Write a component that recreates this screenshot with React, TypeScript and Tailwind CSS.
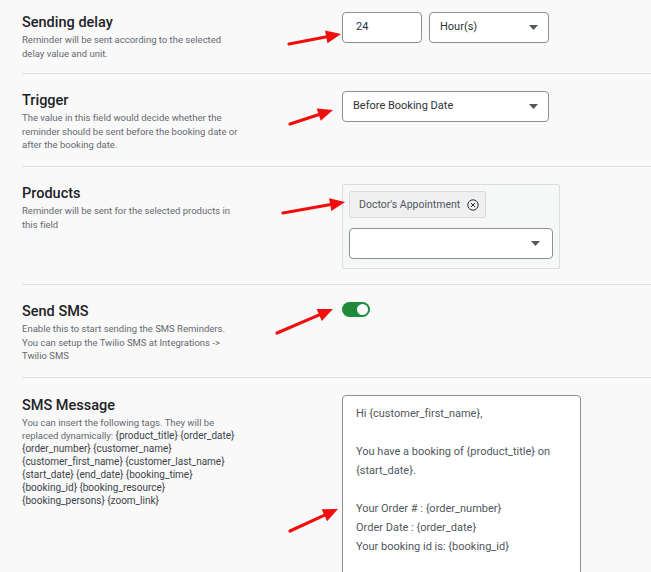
import React from 'react';

type Arrow = { x1: number; y1: number; x2: number; y2: number };

const arrows: Arrow[] = [
  { x1: 289, y1: 44, x2: 341, y2: 34 },
  { x1: 290, y1: 124, x2: 333, y2: 110 },
  { x1: 283, y1: 213, x2: 345, y2: 202 },
  { x1: 277, y1: 333, x2: 333, y2: 309 },
  { x1: 290, y1: 531, x2: 338, y2: 509 },
];

function ArrowShape({ x1, y1, x2, y2 }: Arrow) {
  const dx = x2 - x1;
  const dy = y2 - y1;
  const len = Math.sqrt(dx * dx + dy * dy);
  const ux = dx / len;
  const uy = dy / len;
  const head = 15;
  const half = 6.5;
  const bx = x2 - ux * head;
  const by = y2 - uy * head;
  const pts = `${x2},${y2} ${bx - uy * half},${by + ux * half} ${bx + uy * half},${by - ux * half}`;
  return (
    <g>
      <line x1={x1} y1={y1} x2={bx + ux * 2} y2={by + uy * 2} stroke="#f20d0d" strokeWidth={3.2} strokeLinecap="round" />
      <polygon points={pts} fill="#f20d0d" />
    </g>
  );
}

function Caret() {
  return (
    <svg width="9" height="5" viewBox="0 0 9 5" className="shrink-0">
      <path d="M0 0 L9 0 L4.5 5 Z" fill="#50575e" />
    </svg>
  );
}

function Label({ title, children }: { title: string; children: React.ReactNode }) {
  return (
    <div className="w-[320px] shrink-0">
      <h3 className="text-[14.5px] leading-[20px] font-medium text-[#1d2327]">{title}</h3>
      <p className="max-w-[217px] text-[9.5px] leading-[13.5px] text-[#646970]">{children}</p>
    </div>
  );
}

// tags in the SMS help text are a touch darker and larger
const Tag = ({ children }: { children: React.ReactNode }) => (
  <span className="text-[10px] text-[#3c434a]">{children}</span>
);

export default function App() {
  return (
    <div className="relative min-h-screen h-[572px] overflow-hidden bg-[#f9f9f9] pl-[22px] font-['Roboto',sans-serif] [font-variant-ligatures:none]">
      {/* Sending delay */}
      <div className="flex h-[74px] border-b border-[#e2e2e2] pt-[12px]">
        <div className="w-[320px] shrink-0 pt-[1px]">
          <h3 className="text-[14.5px] leading-[20px] font-medium text-[#1d2327]">Sending delay</h3>
          <p className="max-w-[217px] text-[9.5px] leading-[13.5px] text-[#646970]">
            Reminder will be sent according to the selected delay value and unit.
          </p>
        </div>
        <div className="flex gap-[7px]">
          <div className="flex h-[31px] w-[80px] items-center rounded-[4px] border border-[#8c8f94] bg-white pl-[13px] text-[11px] text-[#2c3338]">
            24
          </div>
          <div className="flex h-[31px] w-[120px] items-center justify-between rounded-[4px] border border-[#8c8f94] bg-white pl-[10px] pr-[10px] text-[11px] text-[#2c3338]">
            <span>Hour(s)</span>
            <Caret />
          </div>
        </div>
      </div>

      {/* Trigger */}
      <div className="flex h-[93px] border-b border-[#e2e2e2] pt-[17px]">
        <Label title="Trigger">
          The value in this field would decide whether the reminder should be sent before the booking date or after the booking date.
        </Label>
        <div className="flex h-[31px] w-[207px] items-center justify-between rounded-[4px] border border-[#8c8f94] bg-white pl-[10px] pr-[10px] text-[11px] text-[#2c3338]">
          <span>Before Booking Date</span>
          <Caret />
        </div>
      </div>

      {/* Products */}
      <div className="flex h-[118px] border-b border-[#e2e2e2] pt-[17px]">
        <Label title="Products">Reminder will be sent for the selected products in this field</Label>
        <div className="h-[85px] w-[218px] rounded-[2px] border border-[#dcdcde] bg-[#f6f7f7] p-[6px]">
          <div className="inline-flex h-[27px] items-center gap-[7px] rounded-[2px] border border-[#dcdcde] bg-[#f0f0f1] pl-[9px] pr-[6px] text-[10.5px] text-[#50575e]">
            <span>Doctor's Appointment</span>
            <svg width="12" height="12" viewBox="0 0 12 12">
              <circle cx="6" cy="6" r="5.2" fill="none" stroke="#2c3338" strokeWidth="1" />
              <path d="M4 4 L8 8 M8 4 L4 8" stroke="#2c3338" strokeWidth="1" />
            </svg>
          </div>
          <div className="mt-[10px] flex h-[31px] w-[204px] items-center justify-end rounded-[4px] border border-[#8c8f94] bg-white pr-[12px]">
            <Caret />
          </div>
        </div>
      </div>

      {/* Send SMS */}
      <div className="flex h-[93px] border-b border-[#e2e2e2] pt-[17px]">
        <Label title="Send SMS">
          Enable this to start sending the SMS Reminders. You can setup the Twilio SMS at Integrations -&gt; Twilio SMS
        </Label>
        <div className="flex h-[15px] w-[28px] items-center justify-end rounded-full bg-[#1e8b3b] pr-[2px]">
          <div className="h-[11px] w-[11px] rounded-full bg-white" />
        </div>
      </div>

      {/* SMS Message */}
      <div className="flex pt-[17px]">
        <div className="w-[320px] shrink-0 pt-[1px]">
          <h3 className="text-[14.5px] leading-[20px] font-medium text-[#1d2327]">SMS Message</h3>
          <p className="max-w-[217px] text-[9.5px] leading-[13px] text-[#646970]">
            <span>You can insert the following tags. They will be</span> <span>replaced dynamically:</span>{' '}
            <Tag>{'{product_title}'}</Tag> <Tag>{'{order_date}'}</Tag> <Tag>{'{order_number}'}</Tag>{' '}
            <Tag>{'{customer_name}'}</Tag> <Tag>{'{customer_first_name}'}</Tag> <Tag>{'{customer_last_name}'}</Tag>{' '}
            <Tag>{'{start_date}'}</Tag> <Tag>{'{end_date}'}</Tag> <Tag>{'{booking_time}'}</Tag>{' '}
            <Tag>{'{booking_id}'}</Tag> <Tag>{'{booking_resource}'}</Tag> <Tag>{'{booking_persons}'}</Tag>{' '}
            <Tag>{'{zoom_link}'}</Tag>
          </p>
        </div>
        <div className="h-[200px] w-[239px] rounded-[4px] border border-[#8c8f94] bg-white px-[13px] pt-[8px] text-[11px] leading-[19px] text-[#50575e]">
          <p>Hi {'{customer_first_name}'},</p>
          <p className="h-[19px]" />
          <p>You have a booking of {'{product_title}'} on {'{start_date}'}.</p>
          <p className="h-[19px]" />
          <p>Your Order # : {'{order_number}'}</p>
          <p>Order Date : {'{order_date}'}</p>
          <p>Your booking id is: {'{booking_id}'}</p>
        </div>
      </div>

      {/* annotation arrows */}
      <svg className="pointer-events-none absolute inset-0" width="651" height="572">
        {arrows.map((a, i) => (
          <ArrowShape key={i} {...a} />
        ))}
      </svg>
    </div>
  );
}
